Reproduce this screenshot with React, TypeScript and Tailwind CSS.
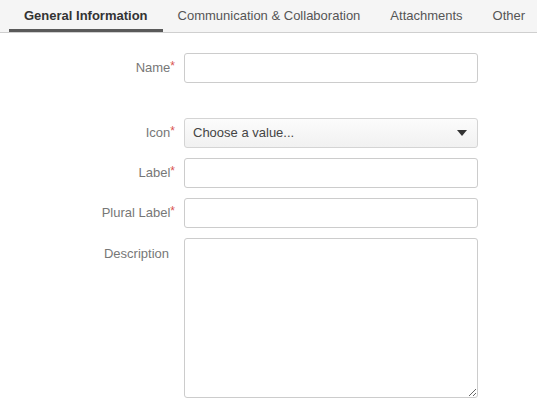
import { useState } from 'react';

const tabs = ['General Information', 'Communication & Collaboration', 'Attachments', 'Other'];

function Label({ text, required }: { text: string; required?: boolean }) {
  return (
    <div className="w-[175px] shrink-0 text-right text-[13px] text-[#777]">
      {text}
      {required ? (
        <span className="text-[#d9534f] text-[12px] align-top relative top-[-1px]">*</span>
      ) : (
        <span className="inline-block w-[6px]" />
      )}
    </div>
  );
}

export default function App() {
  const [active, setActive] = useState(0);

  return (
    <div className="w-[537px] h-[407px] bg-white overflow-hidden" style={{ fontFamily: '"Liberation Sans", Arial, sans-serif' }}>
      {/* Tabs */}
      <div className="h-[33px] bg-[#f5f5f5] border-b border-[#cfcfcf] flex pl-[9px]">
        {tabs.map((t, i) => (
          <button
            key={t}
            onClick={() => setActive(i)}
            className={
              'px-[15px] h-[32px] text-[13px] whitespace-nowrap border-b-[3px] pt-[3px] ' +
              (i === active ? 'font-bold text-[#333] border-[#5a5a5a]' : 'text-[#555] border-transparent')
            }
          >
            {t}
          </button>
        ))}
      </div>

      {/* Form */}
      <div className="pt-[20px] flex flex-col gap-[10px]">
        <div className="flex items-center gap-[9px]">
          <Label text="Name" required />
          <input className="w-[294px] h-[30px] border border-[#ccc] rounded-[3px] px-2 text-[13px] outline-none" />
        </div>

        <div className="flex items-center gap-[9px] mt-[25px]">
          <Label text="Icon" required />
          <div className="w-[294px] h-[30px] border border-[#d4d4d4] rounded-[3px] bg-gradient-to-b from-[#fcfcfc] to-[#f1f1f1] flex items-center justify-between pl-[8px] pr-[10px]">
            <span className="text-[13px] text-[#444]">Choose a value...</span>
            <svg width="10" height="6" viewBox="0 0 10 6">
              <path d="M0 0 L10 0 L5 6 Z" fill="#333" />
            </svg>
          </div>
        </div>

        <div className="flex items-center gap-[9px]">
          <Label text="Label" required />
          <input className="w-[294px] h-[30px] border border-[#ccc] rounded-[3px] px-2 text-[13px] outline-none" />
        </div>

        <div className="flex items-center gap-[9px]">
          <Label text="Plural Label" required />
          <input className="w-[294px] h-[30px] border border-[#ccc] rounded-[3px] px-2 text-[13px] outline-none" />
        </div>

        <div className="flex items-start gap-[9px]">
          <div className="pt-[6px]">
            <Label text="Description" />
          </div>
          <textarea className="w-[294px] h-[160px] border border-[#ccc] rounded-[3px] px-2 py-1 text-[13px] outline-none" />
        </div>
      </div>
    </div>
  );
}
